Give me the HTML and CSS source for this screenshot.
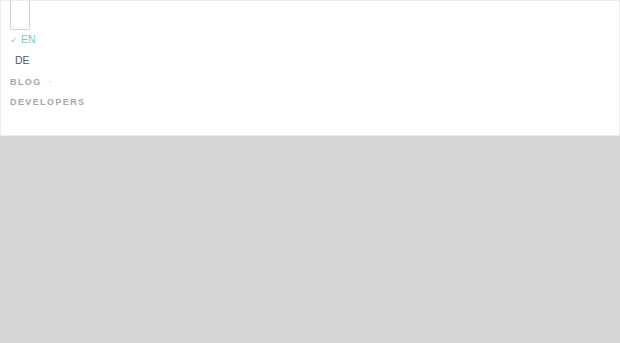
FILE: index.html
```html
<!DOCTYPE html>
<html>
<head>
<meta charset="utf-8">
<link rel="stylesheet" href="styles.css">
</head>
<body>
<header class="panel">
  <div class="toggle"></div>
  <ul class="langs">
    <li class="lang active"><span class="check">✓</span> EN</li>
    <li class="lang">DE</li>
  </ul>
  <nav class="nav">
    <a class="nav-item">BLOG <span class="dot">·</span></a>
    <a class="nav-item">DEVELOPERS</a>
  </nav>
</header>
<main class="content"></main>
</body>
</html>
```
FILE: styles.css
```css
html, body {
  margin: 0;
  padding: 0;
  height: 100%;
}
body {
  background: #d4d5d7;
  font-family: "Liberation Sans", Arial, sans-serif;
}
.panel {
  box-sizing: border-box;
  height: 136px;
  background: #fff;
  border: 1px solid #ececec;
  padding: 0 9px;
}
.toggle {
  width: 18px;
  height: 28px;
  border: 1px solid #d0d0d0;
  border-top: 0;
  border-radius: 0 0 2px 2px;
}
.langs {
  list-style: none;
  margin: 0;
  padding: 0;
}
.lang {
  font-size: 10.5px;
  line-height: 23px;
  color: #5a5a5a;
  padding-left: 5px;
}
.lang.active {
  color: #6fd0c2;
  padding-left: 0;
  line-height: 18px;
}
.check {
  font-size: 9px;
}
.nav {
  display: flex;
  flex-direction: column;
}
.nav-item {
  font-size: 9px;
  font-weight: bold;
  letter-spacing: 1.4px;
  color: #a6a6a6;
  line-height: 20px;
}
.dot {
  color: #9fdcd2;
  margin-left: 3px;
}
```
